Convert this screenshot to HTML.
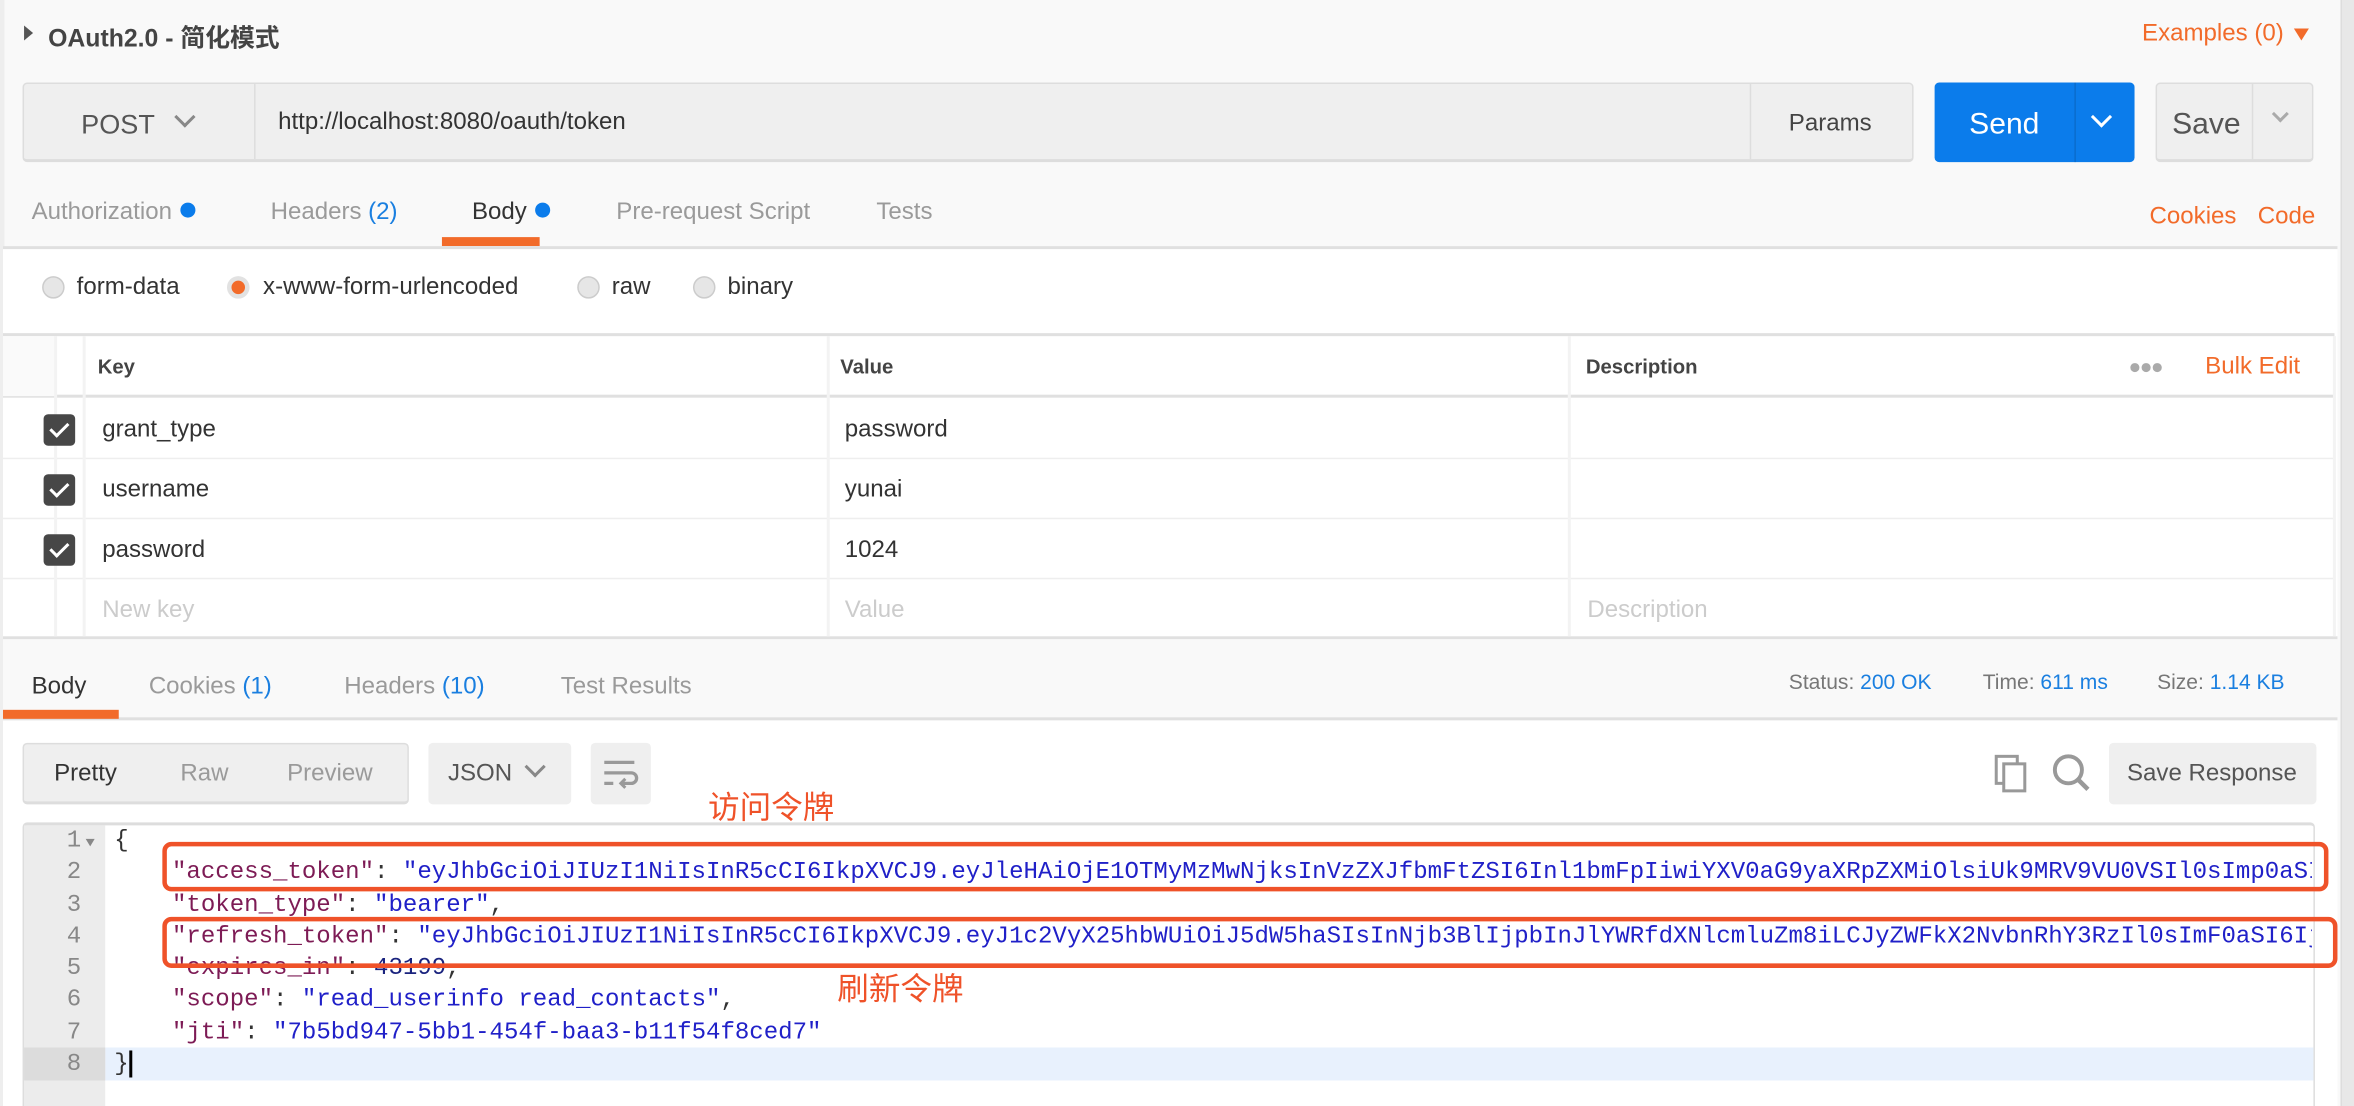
<!DOCTYPE html>
<html><head><meta charset="utf-8">
<style>
*{box-sizing:border-box;margin:0;padding:0}
html,body{width:2354px;height:1106px;overflow:hidden;background:#f9f9f9}
#w{position:absolute;left:0;top:0;width:1566px;height:737px;transform:scale(1.50319,1.50068);transform-origin:0 0;font-family:"Liberation Sans","Noto Sans CJK SC",sans-serif;color:#333;background:#f9f9f9;overflow:hidden}
.a{position:absolute;white-space:nowrap}
.or{color:#f26b2a}
.bl{color:#1a7fe0}
.g{color:#9a9a9a}
.dot{display:inline-block;width:10px;height:10px;border-radius:50%;background:#0b7ceb;margin-left:6px;vertical-align:1px}
.mono{font-family:"Liberation Mono","DejaVu Sans Mono",monospace;font-size:16px}
.k{color:#7d1b55}.s{color:#2020c8}.n{color:#1a237e}
.chev{position:absolute;width:10px;height:10px;border-right:2px solid #888;border-bottom:2px solid #888;transform:rotate(45deg)}
.radio{position:absolute;width:15px;height:15px;border-radius:50%;background:#e6e6e6;border:1px solid #ccc}
.cb{position:absolute;left:29px;width:21px;height:21px;border-radius:3px;background:#474747}
.cb:after{content:"";position:absolute;left:7px;top:3px;width:5px;height:10px;border-right:2.5px solid #fff;border-bottom:2.5px solid #fff;transform:rotate(45deg)}
</style></head><body><div id="w">
<div class="a" style="right:0;top:0;width:9px;height:737px;background:#e8e8e8;border-left:1px solid #ddd"></div>
<div class="a" style="left:0;top:0;width:3px;height:737px;background:#eee"></div>
<div class="a" style="left:16px;top:17px;width:0;height:0;border-left:6px solid #555;border-top:5px solid transparent;border-bottom:5px solid transparent"></div>
<div class="a" style="left:32px;top:12px;font-size:16.5px;font-weight:bold;color:#444">OAuth2.0 - 简化模式</div>
<div class="a or" style="left:1425px;top:14px;font-size:16px">Examples (0)</div>
<div class="a" style="left:1526px;top:19px;border-top:8px solid #f26b2a;border-left:5px solid transparent;border-right:5px solid transparent"></div>

<div class="a" style="left:15px;top:55px;width:1258px;height:53px;background:#efefef;border:1px solid #ddd;border-bottom-width:2px;border-radius:3px"></div>
<div class="a" style="left:169px;top:56px;width:1px;height:50px;background:#ddd"></div>
<div class="a" style="left:1164px;top:56px;width:1px;height:50px;background:#ddd"></div>
<div class="a" style="left:54px;top:73px;font-size:18px;color:#555">POST</div>
<div class="chev" style="left:118px;top:73px"></div>
<div class="a" style="left:185px;top:73px;font-size:16px;color:#333">http://localhost:8080/oauth/token</div>
<div class="a" style="left:1190px;top:74px;font-size:16px;color:#444">Params</div>
<div class="a" style="left:1287px;top:55px;width:133px;height:53px;background:#0b7ceb;border-radius:3px"></div>
<div class="a" style="left:1380px;top:55px;width:1px;height:53px;background:#0a6ccd"></div>
<div class="a" style="left:1310px;top:72px;font-size:20px;color:#fff">Send</div>
<div class="chev" style="left:1393px;top:73px;border-color:#fff"></div>
<div class="a" style="left:1434px;top:55px;width:105px;height:53px;background:#efefef;border:1px solid #ddd;border-bottom-width:2px;border-radius:3px"></div>
<div class="a" style="left:1498px;top:56px;width:1px;height:50px;background:#ddd"></div>
<div class="a" style="left:1445px;top:72px;font-size:20px;color:#555">Save</div>
<div class="chev" style="left:1513px;top:72px;border-color:#aaa;width:8px;height:8px"></div>

<div class="a g" style="left:21px;top:133px;font-size:16px">Authorization<span class="dot"></span></div>
<div class="a g" style="left:180px;top:133px;font-size:16px">Headers <span class="bl">(2)</span></div>
<div class="a" style="left:314px;top:133px;font-size:16px;color:#333">Body<span class="dot"></span></div>
<div class="a g" style="left:410px;top:133px;font-size:16px">Pre-request Script</div>
<div class="a g" style="left:583px;top:133px;font-size:16px">Tests</div>
<div class="a or" style="left:1430px;top:136px;font-size:16px">Cookies</div>
<div class="a or" style="left:1502px;top:136px;font-size:16px">Code</div>
<div class="a" style="left:294px;top:158px;width:65px;height:6px;background:#f26b2a"></div>
<div class="a" style="left:2px;top:164px;width:1553px;height:573px;background:#fff;border-top:2px solid #e0e0e0"></div>

<div class="radio" style="left:28px;top:184px"></div>
<div class="a" style="left:51px;top:183px;font-size:16px">form-data</div>
<div class="radio" style="left:151px;top:184px;background:#f26b2a;border:3px solid #e2e2e2"></div>
<div class="a" style="left:175px;top:183px;font-size:16px">x-www-form-urlencoded</div>
<div class="radio" style="left:384px;top:184px"></div>
<div class="a" style="left:407px;top:183px;font-size:16px">raw</div>
<div class="radio" style="left:461px;top:184px"></div>
<div class="a" style="left:484px;top:183px;font-size:16px">binary</div>

<div class="a" style="left:2px;top:222px;width:1551px;height:2px;background:#e0e0e0"></div>
<div class="a" style="left:2px;top:263px;width:1551px;height:2px;background:#e0e0e0"></div>
<div class="a" style="left:2px;top:305px;width:1551px;height:1px;background:#eee"></div>
<div class="a" style="left:2px;top:345px;width:1551px;height:1px;background:#eee"></div>
<div class="a" style="left:2px;top:385px;width:1551px;height:1px;background:#eee"></div>
<div class="a" style="left:2px;top:424px;width:1553px;height:2px;background:#e0e0e0"></div>
<div class="a" style="left:2px;top:224px;width:35px;height:40px;background:#fafafa"></div>
<div class="a" style="left:36px;top:224px;width:2px;height:200px;background:#f3f3f3"></div>
<div class="a" style="left:55px;top:224px;width:2px;height:200px;background:#f3f3f3"></div>
<div class="a" style="left:550px;top:224px;width:2px;height:200px;background:#f3f3f3"></div>
<div class="a" style="left:1043px;top:224px;width:2px;height:200px;background:#f3f3f3"></div>
<div class="a" style="left:1552px;top:224px;width:2px;height:200px;background:#f3f3f3"></div>
<div class="a" style="left:65px;top:237px;font-size:13.5px;font-weight:bold;color:#444">Key</div>
<div class="a" style="left:559px;top:237px;font-size:13.5px;font-weight:bold;color:#444">Value</div>
<div class="a" style="left:1055px;top:237px;font-size:13.5px;font-weight:bold;color:#444">Description</div>
<div class="a" style="left:1416px;top:236px;font-size:14px;color:#aaa;letter-spacing:-1px">●●●</div>
<div class="a or" style="left:1467px;top:236px;font-size:16px">Bulk Edit</div>

<div class="cb" style="top:276px"></div>
<div class="a" style="left:68px;top:278px;font-size:16px">grant_type</div>
<div class="a" style="left:562px;top:278px;font-size:16px">password</div>
<div class="cb" style="top:316px"></div>
<div class="a" style="left:68px;top:318px;font-size:16px">username</div>
<div class="a" style="left:562px;top:318px;font-size:16px">yunai</div>
<div class="cb" style="top:356px"></div>
<div class="a" style="left:68px;top:358px;font-size:16px">password</div>
<div class="a" style="left:562px;top:358px;font-size:16px">1024</div>
<div class="a" style="left:68px;top:398px;font-size:16px;color:#ccc">New key</div>
<div class="a" style="left:562px;top:398px;font-size:16px;color:#ccc">Value</div>
<div class="a" style="left:1056px;top:398px;font-size:16px;color:#ccc">Description</div>

<div class="a" style="left:2px;top:426px;width:1553px;height:54px;background:#f9f9f9;border-bottom:2px solid #e0e0e0"></div>
<div class="a" style="left:21px;top:449px;font-size:16px">Body</div>
<div class="a" style="left:2px;top:473px;width:77px;height:6px;background:#f26b2a"></div>
<div class="a g" style="left:99px;top:449px;font-size:16px">Cookies <span class="bl">(1)</span></div>
<div class="a g" style="left:229px;top:449px;font-size:16px">Headers <span class="bl">(10)</span></div>
<div class="a g" style="left:373px;top:449px;font-size:16px">Test Results</div>
<div class="a" style="left:1190px;top:446px;font-size:14px;color:#777">Status: <span class="bl">200 OK</span></div>
<div class="a" style="left:1319px;top:446px;font-size:14px;color:#777">Time: <span class="bl">611 ms</span></div>
<div class="a" style="left:1435px;top:446px;font-size:14px;color:#777">Size: <span class="bl">1.14 KB</span></div>

<div class="a" style="left:15px;top:495px;width:257px;height:41px;background:#efefef;border:1px solid #ddd;border-bottom-width:2px;border-radius:3px"></div>
<div class="a" style="left:36px;top:507px;font-size:16px">Pretty</div>
<div class="a g" style="left:120px;top:507px;font-size:16px">Raw</div>
<div class="a g" style="left:191px;top:507px;font-size:16px">Preview</div>
<div class="a" style="left:285px;top:495px;width:95px;height:41px;background:#efefef;border-radius:3px"></div>
<div class="a" style="left:298px;top:507px;font-size:16px;color:#555">JSON</div>
<div class="chev" style="left:351px;top:506px;border-color:#888"></div>
<div class="a" style="left:393px;top:495px;width:40px;height:41px;background:#efefef;border-radius:3px"></div>
<svg class="a" style="left:400px;top:503px" width="26" height="26" viewBox="0 0 26 26"><path d="M2 5h20M2 12h18a3.5 3.5 0 0 1 0 7h-6M2 19h6" fill="none" stroke="#999" stroke-width="2.2"/><path d="M16 16l-3 3 3 3" fill="none" stroke="#999" stroke-width="2"/></svg>
<svg class="a" style="left:1325px;top:501px" width="28" height="28" viewBox="0 0 28 28"><rect x="3" y="3" width="14" height="18" fill="none" stroke="#999" stroke-width="2"/><rect x="8" y="8" width="14" height="18" fill="#fff" stroke="#999" stroke-width="2"/></svg>
<svg class="a" style="left:1364px;top:501px" width="28" height="28" viewBox="0 0 28 28"><circle cx="12" cy="12" r="9" fill="none" stroke="#999" stroke-width="2.6"/><path d="M18 18l7 7" stroke="#999" stroke-width="3"/></svg>
<div class="a" style="left:1403px;top:495px;width:138px;height:41px;background:#efefef;border-radius:3px"></div>
<div class="a" style="left:1415px;top:507px;font-size:16px;color:#555">Save Response</div>

<div class="a" style="left:15px;top:548px;width:1525px;height:195px;background:#fff;border:1px solid #ddd;border-top-width:2px;border-radius:3px 3px 0 0"></div>
<div class="a" style="left:16px;top:550px;width:54px;height:190px;background:#ececec"></div>
<div class="a" style="left:70px;top:698px;width:1469px;height:22px;background:#e8f1fd"></div>
<div class="a" style="left:16px;top:698px;width:54px;height:22px;background:#dcdcdc"></div>
<div class="a mono" style="left:32px;top:550px;line-height:21.3px;color:#888;text-align:right;width:22px">1<br>2<br>3<br>4<br>5<br>6<br>7<br>8</div>
<div class="a" style="left:57px;top:559px;border-top:5px solid #888;border-left:3px solid transparent;border-right:3px solid transparent"></div>
<div class="a mono" style="left:76px;top:550px;line-height:21.3px;width:1462px;overflow:hidden;color:#333">{<br>
&nbsp;&nbsp;&nbsp;&nbsp;<span class="k">"access_token"</span>: <span class="s">"eyJhbGciOiJIUzI1NiIsInR5cCI6IkpXVCJ9.eyJleHAiOjE1OTMyMzMwNjksInVzZXJfbmFtZSI6Inl1bmFpIiwiYXV0aG9yaXRpZXMiOlsiUk9MRV9VU0VSIl0sImp0aSI6Ij</span><br>
&nbsp;&nbsp;&nbsp;&nbsp;<span class="k">"token_type"</span>: <span class="s">"bearer"</span>,<br>
&nbsp;&nbsp;&nbsp;&nbsp;<span class="k">"refresh_token"</span>: <span class="s">"eyJhbGciOiJIUzI1NiIsInR5cCI6IkpXVCJ9.eyJ1c2VyX25hbWUiOiJ5dW5haSIsInNjb3BlIjpbInJlYWRfdXNlcmluZm8iLCJyZWFkX2NvbnRhY3RzIl0sImF0aSI6Ij</span><br>
&nbsp;&nbsp;&nbsp;&nbsp;<span class="k">"expires_in"</span>: <span class="n">43199</span>,<br>
&nbsp;&nbsp;&nbsp;&nbsp;<span class="k">"scope"</span>: <span class="s">"read_userinfo read_contacts"</span>,<br>
&nbsp;&nbsp;&nbsp;&nbsp;<span class="k">"jti"</span>: <span class="s">"7b5bd947-5bb1-454f-baa3-b11f54f8ced7"</span><br>
}<span style="display:inline-block;width:2px;height:18px;background:#000;vertical-align:middle"></span></div>

<div class="a" style="left:108px;top:561px;width:1441px;height:33px;border:3.5px solid #ef5229;border-radius:6px"></div>
<div class="a" style="left:108px;top:611px;width:1447px;height:34px;border:3.5px solid #ef5229;border-radius:6px"></div>
<div class="a" style="left:471px;top:522px;font-size:21px;color:#ef5229;font-family:'Noto Sans CJK SC',sans-serif">访问令牌</div>
<div class="a" style="left:557px;top:643px;font-size:21px;color:#ef5229;font-family:'Noto Sans CJK SC',sans-serif">刷新令牌</div>
</div></body></html>
